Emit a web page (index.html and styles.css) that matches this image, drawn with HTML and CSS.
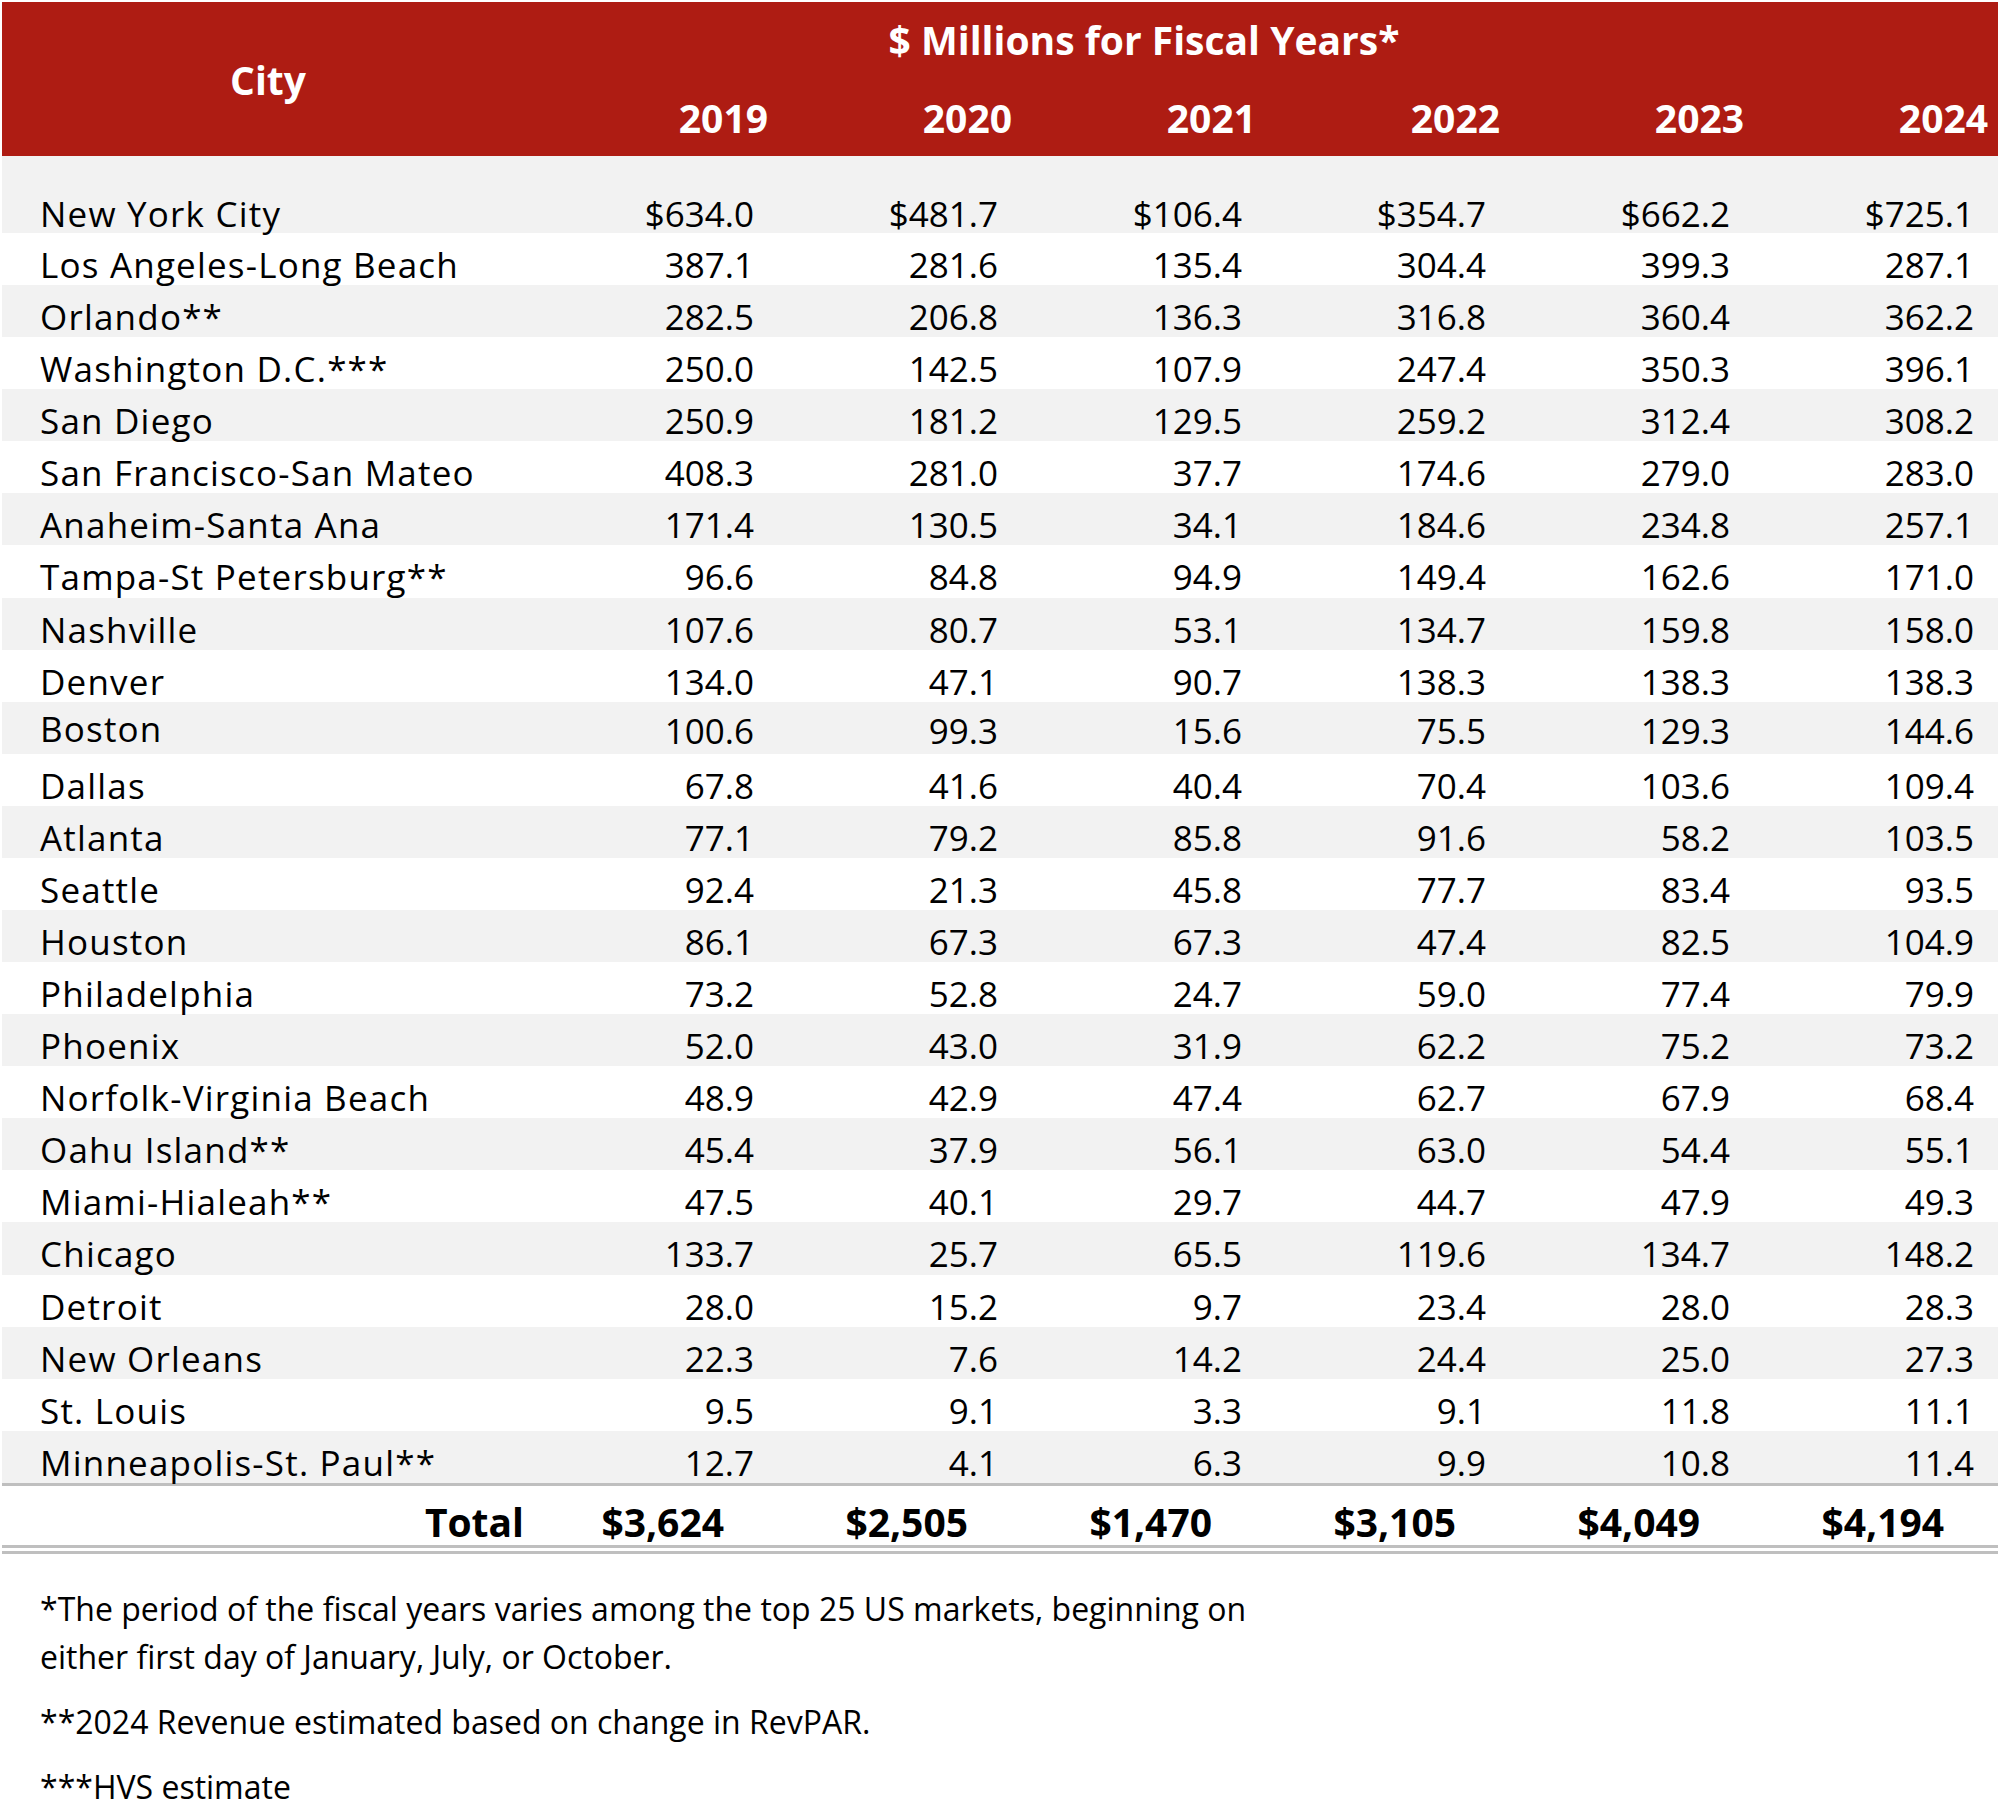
FILE: index.html
```html
<!DOCTYPE html>
<html lang="en">
<head>
<meta charset="utf-8">
<title>Hotel Tax Revenue by City</title>
<link rel="stylesheet" href="styles.css">
</head>
<body>
<div class="page">
<table class="revenue">
  <colgroup>
    <col class="c-city">
    <col class="c-year"><col class="c-year"><col class="c-year">
    <col class="c-year"><col class="c-year"><col class="c-year">
  </colgroup>
  <thead>
    <tr class="head-top">
      <th class="city-head" rowspan="2">City</th>
      <th class="span-head" colspan="5">$ Millions for Fiscal Years*</th>
      <th class="empty-head"></th>
    </tr>
    <tr class="head-years">
      <th>2019</th><th>2020</th><th>2021</th><th>2022</th><th>2023</th><th>2024</th>
    </tr>
  </thead>
  <tbody>
    <tr class="first"><td>New York City</td><td>$634.0</td><td>$481.7</td><td>$106.4</td><td>$354.7</td><td>$662.2</td><td>$725.1</td></tr>
    <tr><td>Los Angeles-Long Beach</td><td>387.1</td><td>281.6</td><td>135.4</td><td>304.4</td><td>399.3</td><td>287.1</td></tr>
    <tr><td>Orlando**</td><td>282.5</td><td>206.8</td><td>136.3</td><td>316.8</td><td>360.4</td><td>362.2</td></tr>
    <tr><td>Washington D.C.***</td><td>250.0</td><td>142.5</td><td>107.9</td><td>247.4</td><td>350.3</td><td>396.1</td></tr>
    <tr><td>San Diego</td><td>250.9</td><td>181.2</td><td>129.5</td><td>259.2</td><td>312.4</td><td>308.2</td></tr>
    <tr><td>San Francisco-San Mateo</td><td>408.3</td><td>281.0</td><td>37.7</td><td>174.6</td><td>279.0</td><td>283.0</td></tr>
    <tr><td>Anaheim-Santa Ana</td><td>171.4</td><td>130.5</td><td>34.1</td><td>184.6</td><td>234.8</td><td>257.1</td></tr>
    <tr><td>Tampa-St Petersburg**</td><td>96.6</td><td>84.8</td><td>94.9</td><td>149.4</td><td>162.6</td><td>171.0</td></tr>
    <tr><td>Nashville</td><td>107.6</td><td>80.7</td><td>53.1</td><td>134.7</td><td>159.8</td><td>158.0</td></tr>
    <tr><td>Denver</td><td>134.0</td><td>47.1</td><td>90.7</td><td>138.3</td><td>138.3</td><td>138.3</td></tr>
    <tr class="raised"><td>Boston</td><td>100.6</td><td>99.3</td><td>15.6</td><td>75.5</td><td>129.3</td><td>144.6</td></tr>
    <tr><td>Dallas</td><td>67.8</td><td>41.6</td><td>40.4</td><td>70.4</td><td>103.6</td><td>109.4</td></tr>
    <tr><td>Atlanta</td><td>77.1</td><td>79.2</td><td>85.8</td><td>91.6</td><td>58.2</td><td>103.5</td></tr>
    <tr><td>Seattle</td><td>92.4</td><td>21.3</td><td>45.8</td><td>77.7</td><td>83.4</td><td>93.5</td></tr>
    <tr><td>Houston</td><td>86.1</td><td>67.3</td><td>67.3</td><td>47.4</td><td>82.5</td><td>104.9</td></tr>
    <tr><td>Philadelphia</td><td>73.2</td><td>52.8</td><td>24.7</td><td>59.0</td><td>77.4</td><td>79.9</td></tr>
    <tr><td>Phoenix</td><td>52.0</td><td>43.0</td><td>31.9</td><td>62.2</td><td>75.2</td><td>73.2</td></tr>
    <tr><td>Norfolk-Virginia Beach</td><td>48.9</td><td>42.9</td><td>47.4</td><td>62.7</td><td>67.9</td><td>68.4</td></tr>
    <tr><td>Oahu Island**</td><td>45.4</td><td>37.9</td><td>56.1</td><td>63.0</td><td>54.4</td><td>55.1</td></tr>
    <tr><td>Miami-Hialeah**</td><td>47.5</td><td>40.1</td><td>29.7</td><td>44.7</td><td>47.9</td><td>49.3</td></tr>
    <tr><td>Chicago</td><td>133.7</td><td>25.7</td><td>65.5</td><td>119.6</td><td>134.7</td><td>148.2</td></tr>
    <tr><td>Detroit</td><td>28.0</td><td>15.2</td><td>9.7</td><td>23.4</td><td>28.0</td><td>28.3</td></tr>
    <tr><td>New Orleans</td><td>22.3</td><td>7.6</td><td>14.2</td><td>24.4</td><td>25.0</td><td>27.3</td></tr>
    <tr><td>St. Louis</td><td>9.5</td><td>9.1</td><td>3.3</td><td>9.1</td><td>11.8</td><td>11.1</td></tr>
    <tr><td>Minneapolis-St. Paul**</td><td>12.7</td><td>4.1</td><td>6.3</td><td>9.9</td><td>10.8</td><td>11.4</td></tr>
  </tbody>
  <tfoot>
    <tr><th>Total</th><td>$3,624</td><td>$2,505</td><td>$1,470</td><td>$3,105</td><td>$4,049</td><td>$4,194</td></tr>
  </tfoot>
</table>
<div class="notes">
  <p>*The period of the fiscal years varies among the top 25 US markets, beginning on<br>either first day of January, July, or October.</p>
  <p>**2024 Revenue estimated based on change in RevPAR.</p>
  <p>***HVS estimate</p>
</div>
</div>
</body>
</html>
```

FILE: styles.css
```css
html, body {
  margin: 0;
  padding: 0;
  background: #ffffff;
}

.page {
  width: 1996px;
  padding: 2px 2px 0 2px;
  font-family: "Open Sans", "Lato", sans-serif;
  color: #000000;
}

.revenue {
  width: 1996px;
  table-layout: fixed;
  border-collapse: collapse;
  border-spacing: 0;
}

.c-city { width: 532px; }
.c-year { width: 244px; }

.revenue thead {
  background: #ae1c13;
  color: #ffffff;
}

.revenue th {
  font-weight: 700;
  font-size: 39px;
  line-height: 39px;
}

.head-top th {
  height: 78px;
  padding: 18px 0 0 0;
  box-sizing: border-box;
  vertical-align: top;
  text-align: center;
}

.head-top .city-head {
  vertical-align: middle;
  padding: 0;
  text-align: center;
}

.head-years th {
  padding: 18px 10px 19px 0;
  text-align: right;
  vertical-align: top;
}

.revenue tbody td {
  font-size: 35px;
  line-height: 35px;
  padding: 14px 24px 3.08px 0;
  text-align: right;
  vertical-align: top;
  white-space: nowrap;
}

.revenue tbody td:first-child {
  text-align: left;
  padding-left: 38px;
  padding-right: 0;
  letter-spacing: 1.2px;
}

.revenue tbody tr:nth-child(odd) {
  background: #f2f2f2;
}

.revenue tbody tr.first td {
  padding-top: 40px;
  padding-bottom: 2px;
}

.revenue tbody tr.raised td {
  padding-top: 11px;
  padding-bottom: 6.08px;
}

.revenue tbody tr.raised td:first-child {
  padding-top: 9px;
  padding-bottom: 8.08px;
}

.revenue tfoot tr {
  border-top: 3px solid #bfbfbf;
  border-bottom: 9px double #bfbfbf;
}

.revenue tfoot th,
.revenue tfoot td {
  font-weight: 700;
  font-size: 39px;
  line-height: 39px;
  padding: 16px 54px 4px 0;
  text-align: right;
  vertical-align: top;
}

.revenue tfoot th {
  padding-right: 10px;
}

.notes {
  margin-top: 31px;
  padding-left: 38px;
  font-size: 32px;
  line-height: 48px;
}

.notes p {
  margin: 0 0 17px 0;
}
```
